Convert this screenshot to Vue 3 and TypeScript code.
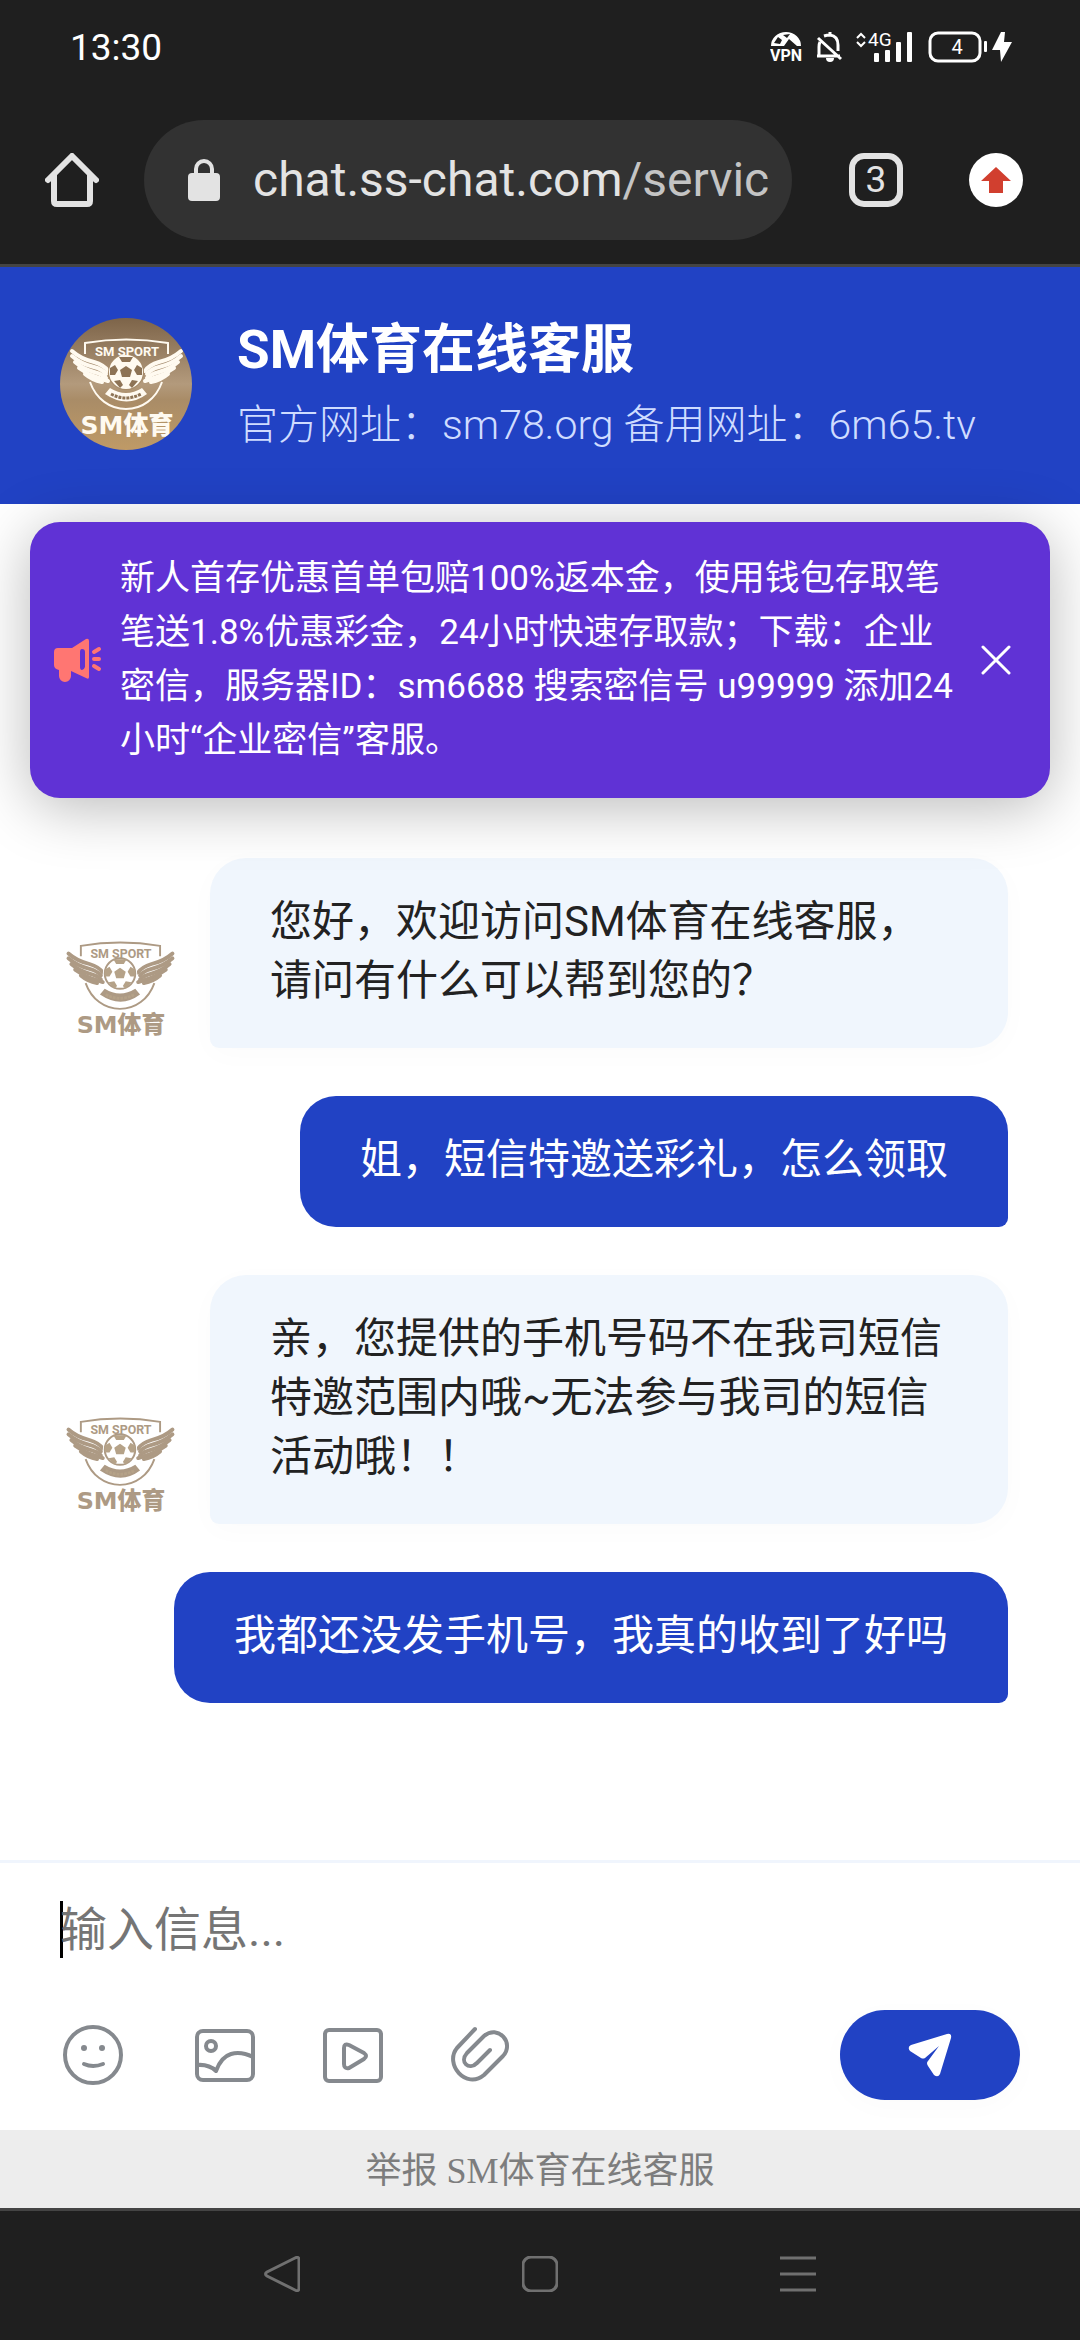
<script setup lang="ts">
import { ref } from 'vue'

interface Message {
  id: number
  from: 'agent' | 'visitor'
  text: string
}

const messages: Message[] = [
  { id: 1, from: 'agent', text: '您好，欢迎访问SM体育在线客服，请问有什么可以帮到您的？' },
  { id: 2, from: 'visitor', text: '姐，短信特邀送彩礼，怎么领取' },
  { id: 3, from: 'agent', text: '亲，您提供的手机号码不在我司短信特邀范围内哦~无法参与我司的短信活动哦！！' },
  { id: 4, from: 'visitor', text: '我都还没发手机号，我真的收到了好吗' },
]

const notice =
  '新人首存优惠首单包赔100%返本金，使用钱包存取笔笔送1.8%优惠彩金，24小时快速存取款；下载：企业密信，服务器ID：sm6688 搜索密信号 u99999 添加24小时“企业密信”客服。'

const showNotice = ref(true)
const draft = ref('')
</script>

<template>
  <div class="screen">
    <!-- Shared brand emblem -->
    <svg class="defs" width="0" height="0" aria-hidden="true">
      <symbol id="emblem" viewBox="0 0 132 132">
        <path class="line" stroke-width="2" d="M25 36V25Q66 18 108 25V36" />
        <path class="line" stroke-width="2" d="M30 64C36 81 50 91 66 91S96 81 102 64" />
        <g class="line" stroke-width="4" stroke-linecap="round">
          <path d="M12 33Q21 41 34 44Q44 47 48 53" />
          <path d="M12 38Q21 46 34 49Q42 51 46 56" />
          <path d="M15 44Q23 51 34 54Q42 56 46 60" />
          <path d="M19 50Q27 56 36 59L48 63" />
          <path d="M25 56Q32 62 42 64" />
          <path d="M121 33Q112 41 99 44Q89 47 85 53" />
          <path d="M121 38Q112 46 99 49Q91 51 87 56" />
          <path d="M118 44Q110 51 99 54Q91 56 87 60" />
          <path d="M114 50Q106 56 97 59L85 63" />
          <path d="M108 56Q101 62 91 64" />
        </g>
        <circle class="paper" cx="66" cy="54" r="18" />
        <circle class="ball" cx="66" cy="54" r="16" />
        <g class="patch">
          <path d="M66 48l6 4-2 7h-8l-2-7z" />
          <path d="M59 39h14l-3 5h-8z" />
          <path d="M50 50l5-3 3 5-3 5-5 0z" />
          <path d="M82 50l-5-3-3 5 3 5 5 0z" />
          <path d="M54 63l6-1 3 5-3 3z" />
          <path d="M78 63l-6-1-3 5 3 3z" />
        </g>
        <path class="ink" d="M50 70Q66 80 82 70L87 76Q67 91 45 76Z" />
        <path class="patch-line" d="M51 76Q66 84 81 76" />
      </symbol>
    </svg>

    <header class="system">
      <div class="status">
        <time class="clock">13:30</time>
        <svg class="status-icons" width="246" height="36" viewBox="0 0 246 36" aria-hidden="true">
          <g fill="#fff">
            <path fill-rule="evenodd" d="M1 16A15 14 0 0 1 31 16H27L19 9L14 16ZM4 13L10 14L12 10L8 7ZM13 5L17 8L20 4Z" />
            <text x="16" y="31" font-size="16" font-weight="700" text-anchor="middle">VPN</text>
            <path d="M56 28h8a4 4 0 0 1-8 0z" />
            <rect x="104" y="23" width="5" height="9" rx="1" />
            <rect x="115" y="20" width="5" height="12" rx="1" />
            <rect x="126" y="12" width="5" height="20" rx="1" />
            <rect x="137" y="2" width="5" height="30" rx="1" />
            <text x="98" y="16" font-size="19">4G</text>
            <text x="187" y="24" font-size="20" text-anchor="middle">4</text>
            <rect x="214" y="11" width="3" height="11" rx="1" />
            <path d="M231 2L222 20h8l1 12 11-20h-8l1-10z" />
          </g>
          <g fill="none" stroke="#fff" stroke-width="3">
            <path d="M47 26h23M49 26V17q0-3 1-5M54 6q3-1 6-1 8 1 8 10v6M60 2v3M48 8L71 29" />
            <path d="M87 8l4-4 4 4M87 12l4 4 4-4" stroke-width="2" />
            <rect x="160" y="3" width="50" height="28" rx="8" />
          </g>
        </svg>
      </div>

      <div class="toolbar">
        <button class="plain home" aria-label="主页">
          <svg width="54" height="54" viewBox="0 0 54 54" fill="none" stroke="#e3e3e3" stroke-width="6" stroke-linecap="round" stroke-linejoin="round">
            <path d="M3 27L27 3l24 24M9 22v26q0 3 3 3h30q3 0 3-3V22" />
          </svg>
        </button>
        <a class="omnibox" href="#">
          <svg width="32" height="42" viewBox="0 0 32 42" aria-hidden="true">
            <rect y="14" width="32" height="28" rx="4" fill="#e3e3e3" />
            <path d="M8 16V10a8 8 0 0 1 16 0v6" fill="none" stroke="#e3e3e3" stroke-width="4" />
          </svg>
          <span class="url">chat.ss-chat.com<span class="path">/service</span></span>
        </a>
        <button class="plain tabs" aria-label="标签页">3</button>
        <button class="plain update" aria-label="更新">
          <svg width="54" height="54" viewBox="0 0 54 54">
            <circle cx="27" cy="27" r="27" fill="#fff" />
            <path d="M27 14l15 14h-8v12H20V28h-8z" fill="#d13f2f" />
          </svg>
        </button>
      </div>
    </header>

    <div class="banner">
      <svg class="avatar" width="132" height="132" viewBox="0 0 132 132" role="img" aria-label="SM体育">
        <use href="#emblem" width="132" height="132" />
        <text class="ink brand-top" x="67" y="38" text-anchor="middle">SM SPORT</text>
        <text class="ink brand-main" x="67" y="116" text-anchor="middle">SM体育</text>
      </svg>
      <div class="banner-text">
        <h1>SM体育在线客服</h1>
        <p>官方网址：sm78.org 备用网址：6m65.tv</p>
      </div>
    </div>

    <main class="chat">
      <aside v-if="showNotice" class="notice">
        <svg class="horn" width="48" height="44" viewBox="0 0 48 44" fill="#ff7672" aria-hidden="true">
          <path fill-rule="evenodd" d="M4 10H18L32 1Q35 0 35 3V39Q35 42 32 40L17 33V38A6 6 0 0 1 5 38V32Q0 31 0 27V14Q0 10 4 10ZM28 11Q26 11 26 14V29Q26 32 28 32T31 29V14Q31 11 28 11Z" />
          <path d="M40 14l5-3M40 21h5M40 28l5 3" stroke="#ff7672" stroke-width="4" stroke-linecap="round" />
        </svg>
        <p>{{ notice }}</p>
        <button class="plain close" aria-label="关闭" @click="showNotice = false">
          <svg width="30" height="30" viewBox="0 0 30 30" stroke="#fff" stroke-width="3" stroke-linecap="round">
            <path d="M2 2l26 26M28 2L2 28" />
          </svg>
        </button>
      </aside>

      <ol class="messages">
        <li v-for="m in messages" :key="m.id" :class="['row', m.from]">
          <svg v-if="m.from === 'agent'" class="agent-logo" width="126" height="126" viewBox="0 0 132 132" role="img" aria-label="SM体育">
            <use href="#emblem" width="132" height="132" />
            <text class="ink brand-top" x="67" y="38" text-anchor="middle">SM SPORT</text>
            <text class="ink brand-main" x="67" y="116" text-anchor="middle">SM体育</text>
          </svg>
          <p class="bubble">{{ m.text }}</p>
        </li>
      </ol>
    </main>

    <form class="composer" @submit.prevent>
      <input v-model="draft" class="draft" type="text" placeholder="输入信息..." aria-label="输入信息" />
      <div class="actions">
        <div class="tools">
          <button type="button" class="plain" aria-label="表情">
            <svg width="66" height="66" viewBox="0 0 66 66" class="tool">
              <circle cx="33" cy="33" r="28" />
              <circle class="dot" cx="24" cy="26" r="3" />
              <circle class="dot" cx="42" cy="26" r="3" />
              <path d="M24 42q9 4 19 0" />
            </svg>
          </button>
          <button type="button" class="plain" aria-label="图片">
            <svg width="66" height="66" viewBox="0 0 66 66" class="tool">
              <rect x="8" y="9" width="56" height="49" rx="6" />
              <circle cx="22" cy="24" r="5" />
              <path d="M8 43q12-1 19 6Q32 35 42 32t22 3" />
            </svg>
          </button>
          <button type="button" class="plain" aria-label="视频">
            <svg width="66" height="66" viewBox="0 0 66 66" class="tool">
              <rect x="7" y="8" width="56" height="51" rx="4" />
              <path d="M26 26q0-5 5-3l15 8q4 3 0 6l-15 9q-5 1-5-4z" />
            </svg>
          </button>
          <button type="button" class="plain" aria-label="附件">
            <svg width="66" height="66" viewBox="0 0 66 66" class="tool">
              <path d="M28 7L10 26C-3 42 19 68 37 53L56 34C68 21 51 2 37 14L20 31C12 40 22 49 30 41L43 28" />
            </svg>
          </button>
        </div>
        <button class="send" aria-label="发送">
          <svg width="44" height="44" viewBox="0 0 44 44" fill="#fff">
            <path d="M39 1Q44 0 43 5L32 41Q30 45 26 42L20 33Q18 30 20 28L31 13L17 25Q15 26 13 25L2 18Q-1 14 3 12Z" />
          </svg>
        </button>
      </div>
    </form>

    <a class="report" href="#">举报 SM体育在线客服</a>

    <nav class="keys">
      <button class="plain" aria-label="返回">
        <svg width="36" height="36" viewBox="0 0 36 36" class="key"><path d="M31 2q4-2 4 2v28q0 4-4 2L3 20q-3-2 0-4z" /></svg>
      </button>
      <button class="plain" aria-label="主屏幕">
        <svg width="36" height="36" viewBox="0 0 36 36" class="key"><rect x="1" y="1" width="34" height="34" rx="8" /></svg>
      </button>
      <button class="plain" aria-label="最近任务">
        <svg width="36" height="36" viewBox="0 0 36 36" class="key"><path d="M0 2h36M0 18h36M0 34h36" /></svg>
      </button>
    </nav>
  </div>
</template>

<style>
body {
  margin: 0;
  background: #fff;
}
</style>

<style scoped>
.screen {
  display: flex;
  flex-direction: column;
  min-height: 100vh;
  font-family: Roboto, "Noto Sans CJK SC", sans-serif;
  color: #222;
}
.screen * {
  box-sizing: border-box;
}
h1,
p,
ol {
  margin: 0;
  padding: 0;
}
svg {
  display: block;
  flex: none;
}
.defs {
  position: absolute;
}
.plain {
  display: block;
  padding: 0;
  border: 0;
  background: none;
  font: inherit;
}

/* Emblem */
.ink { fill: var(--ink); }
.line { fill: none; stroke: var(--ink); }
.ball { fill: var(--ball); stroke: var(--ink); stroke-width: 2; }
.paper { fill: var(--paper); }
.patch { fill: var(--patch); }
.patch-line {
  fill: none;
  stroke: var(--patch);
  stroke-width: 3;
  stroke-dasharray: 3 1;
}
.brand-top { font: 700 13px Roboto, sans-serif; }
.brand-main { font: 900 25px "DejaVu Sans", "Noto Sans CJK SC", sans-serif; }

/* System and browser bars */
.system {
  background: #1f1f1f;
  border-bottom: 3px solid #444;
  padding-bottom: 24px;
}
.status {
  display: flex;
  justify-content: space-between;
  align-items: center;
  height: 96px;
  padding: 0 64px 0 70px;
  color: #fff;
}
.clock {
  font-size: 37px;
  line-height: 48px;
}
.toolbar {
  display: flex;
  align-items: center;
  padding: 24px 57px 0 45px;
}
.omnibox {
  flex: 1;
  min-width: 0;
  display: flex;
  align-items: center;
  gap: 33px;
  height: 120px;
  margin: 0 57px 0 45px;
  padding: 0 24px 0 44px;
  border-radius: 60px;
  background: #323232;
  color: #e3e3e3;
  text-decoration: none;
}
.url {
  flex: 1;
  min-width: 0;
  overflow: hidden;
  white-space: nowrap;
  font-size: 48px;
  line-height: 60px;
}
.path {
  color: #c4c4c4;
}
.tabs {
  width: 54px;
  height: 54px;
  margin-right: 66px;
  border: 6px solid #e3e3e3;
  border-radius: 15px;
  color: #e3e3e3;
  font-size: 37px;
  line-height: 42px;
  text-align: center;
}

/* Chat header */
.banner {
  display: flex;
  align-items: center;
  gap: 45px;
  padding: 51px 60px 54px;
  background: #2142c4;
}
.avatar {
  --ink: #fffaf0;
  --ball: #fffaf0;
  --paper: #a58a69;
  --patch: #8d7355;
  border-radius: 50%;
  background: linear-gradient(#7d6449, #b39a7c 50%, #a98c67 62%, #bf9a66);
}
.banner-text {
  color: #fff;
}
.banner h1 {
  font-size: 53px;
  line-height: 62px;
  font-weight: 700;
}
.banner p {
  margin-top: 20px;
  font-size: 41px;
  line-height: 48px;
  font-weight: 300;
  color: #cfdcff;
}

/* Conversation */
.chat {
  flex: 1;
  padding: 18px 30px 48px;
}
.notice {
  position: relative;
  display: flex;
  align-items: center;
  padding: 30px 39px 30px 24px;
  border-radius: 30px;
  background: #6032d5;
  box-shadow: 0 9px 60px rgba(0, 0, 0, 0.28);
  color: #fff;
}
.notice p {
  flex: 1;
  margin: 0 21px 0 18px;
  font-size: 35px;
  line-height: 54px;
}
.messages {
  display: flex;
  flex-direction: column;
  gap: 48px;
  margin: 60px 42px 0 27px;
  list-style: none;
}
.row {
  display: flex;
  align-items: flex-end;
  gap: 27px;
}
.visitor {
  justify-content: flex-end;
}
.agent-logo {
  --ink: #ad9a84;
  --ball: #fff;
  --paper: #fff;
  --patch: #b5a288;
}
.bubble {
  padding: 34px 60px 38px;
  border-radius: 36px 36px 36px 9px;
  background: #f0f6fd;
  box-shadow: 0 6px 30px rgba(0, 0, 0, 0.02);
  font-size: 42px;
  line-height: 59px;
}
.visitor .bubble {
  border-radius: 36px 36px 9px 36px;
  background: #2142c4;
  box-shadow: none;
  color: #fff;
}

/* Composer */
.composer {
  padding: 38px 60px 30px;
  border-top: 3px solid #f0f5fd;
  background: #fff;
}
.draft {
  display: block;
  width: 100%;
  height: 57px;
  padding: 0;
  border: 0;
  outline: 0;
  background: linear-gradient(#000, #000) left / 3px 100% no-repeat;
  font-family: inherit;
  font-size: 47px;
  line-height: 57px;
}
.draft::placeholder {
  color: #757575;
  opacity: 1;
}
.actions {
  display: flex;
  align-items: center;
  justify-content: space-between;
  margin-top: 52px;
}
.tools {
  display: flex;
  gap: 63px;
}
.tool {
  fill: none;
  stroke: #85898e;
  stroke-width: 4;
  stroke-linecap: round;
  stroke-linejoin: round;
}
.dot {
  fill: #85898e;
  stroke: none;
}
.send {
  display: flex;
  align-items: center;
  justify-content: center;
  width: 180px;
  height: 90px;
  padding: 0;
  border: 0;
  border-radius: 45px;
  background: #2142c4;
  box-shadow: 0 6px 30px rgba(0, 0, 0, 0.02);
}
.report {
  padding: 14px 12px 10px;
  background: #ededed;
  color: #7d7d7d;
  font-family: "Liberation Serif", "Noto Sans CJK SC", serif;
  font-size: 36px;
  line-height: 54px;
  text-align: center;
  text-decoration: none;
}

/* Android navigation keys */
.keys {
  display: flex;
  align-items: center;
  justify-content: center;
  gap: 222px;
  padding: 45px 0 48px;
  border-top: 3px solid #444;
  background: #1f1f1f;
}
.key {
  fill: none;
  stroke: #707070;
  stroke-width: 3;
}
</style>
